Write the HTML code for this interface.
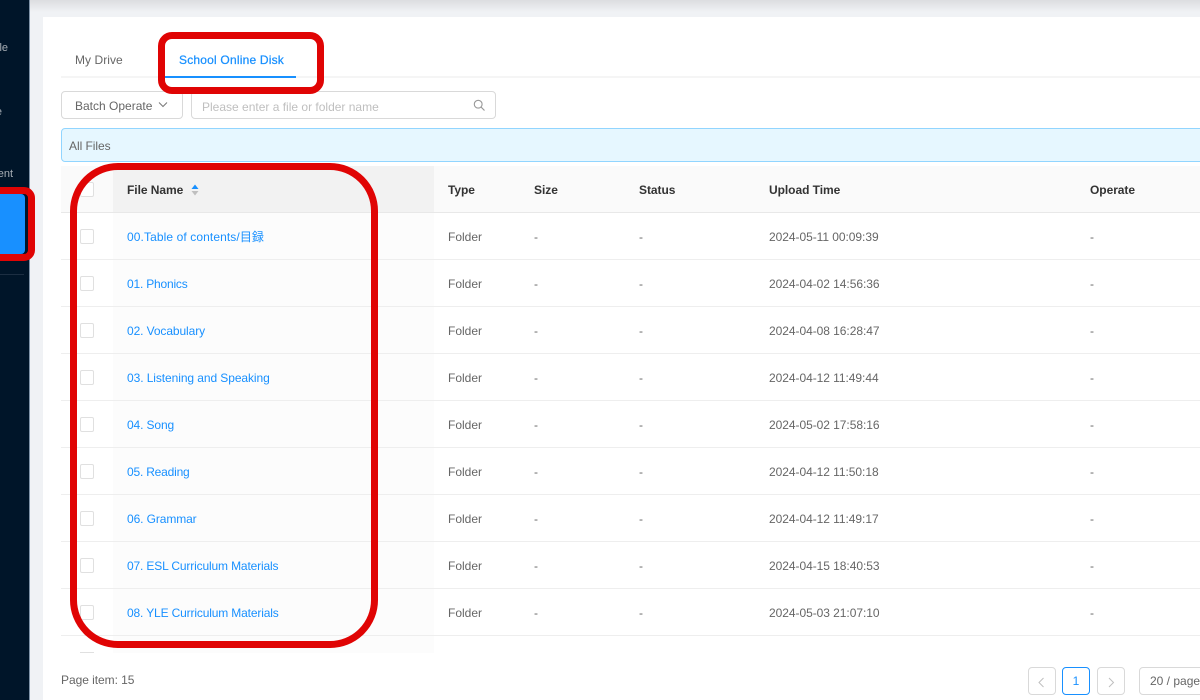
<!DOCTYPE html>
<html><head><meta charset="utf-8"><style>
html,body{margin:0;padding:0;width:1200px;height:700px;overflow:hidden;background:#fff}
body{position:relative;font-family:"Liberation Sans","Noto Sans CJK JP",sans-serif;font-size:12px;color:#666}
.a{position:absolute;white-space:nowrap}
.t{position:absolute;white-space:nowrap;line-height:16px}
.cb{position:absolute;left:80px;width:12px;height:13px;border:1px solid #e0e0e0;border-radius:2px;background:#fff}
.line{position:absolute;left:61px;width:1139px;height:1px;background:#e8e8e8}
.name{left:127px;color:#1890ff}
.h{font-weight:bold;color:#333;letter-spacing:-.05px}
.red{position:absolute;border:7px solid #e00404;box-sizing:border-box}
</style></head><body>
<div class="a" style="left:0;top:0;width:29px;height:700px;background:#001529"></div>
<div class="a" style="left:29px;top:0;width:1px;height:700px;background:#7f93a8"></div>
<div class="a" style="left:30px;top:0;width:1170px;height:700px;background:#f0f2f5"></div>
<div class="a" style="left:30px;top:0;width:1170px;height:12px;background:linear-gradient(#dcdde0,#f0f2f5)"></div>
<div class="a" style="left:43px;top:17px;width:1157px;height:683px;background:#fff"></div>

<div class="t" style="right:1192px;top:40px;color:#a6adb4;font-size:11px">le</div>
<div class="t" style="right:1198px;top:104px;color:#a6adb4;font-size:11px">e</div>
<div class="t" style="right:1187px;top:166px;color:#a6adb4;font-size:11px">ent</div>
<div class="a" style="left:0;top:194px;width:25px;height:60px;background:#1890ff;border-radius:0 4px 4px 0"></div>
<div class="a" style="left:0;top:274px;width:24px;height:1px;background:#1c2e42"></div>

<div class="t" style="left:75px;top:52px;font-size:12px;letter-spacing:.05px">My Drive</div>
<div class="t" style="left:179px;top:52px;font-size:12px;color:#1890ff;letter-spacing:.2px;-webkit-text-stroke:.25px #1890ff">School Online Disk</div>
<div class="a" style="left:61px;top:76px;width:1139px;height:2px;background:#f5f5f5"></div>
<div class="a" style="left:165px;top:76px;width:131px;height:2px;background:#1890ff"></div>

<div class="a" style="left:61px;top:91px;width:122px;height:28px;border:1px solid #d9d9d9;border-radius:4px;box-sizing:border-box"></div>
<div class="t" style="left:75px;top:98px;font-size:12px">Batch Operate</div>
<svg class="a" style="left:158px;top:101px" width="10" height="8" viewBox="0 0 10 8"><path d="M1 1.5 5 5.5 9 1.5" fill="none" stroke="#777" stroke-width="1"/></svg>
<div class="a" style="left:191px;top:91px;width:305px;height:28px;border:1px solid #d9d9d9;border-radius:4px;box-sizing:border-box"></div>
<div class="t" style="left:202px;top:99px;color:#bfbfbf;font-size:12px">Please enter a file or folder name</div>
<svg class="a" style="left:473px;top:99px" width="13" height="13" viewBox="0 0 13 13"><circle cx="5.2" cy="5.2" r="3.9" fill="none" stroke="#999" stroke-width="1.1"/><path d="M8 8 11.5 11.5" stroke="#999" stroke-width="1.2"/></svg>

<div class="a" style="left:61px;top:128px;width:1145px;height:34px;background:#e6f7ff;border:1px solid #91d5ff;border-radius:4px;box-sizing:border-box"></div>
<div class="t" style="left:69px;top:138px;font-size:12px;letter-spacing:-.05px">All Files</div>

<div class="a" style="left:61px;top:166px;width:1139px;height:46px;background:#fafafa"></div>
<div class="a" style="left:113px;top:166px;width:321px;height:46px;background:#f2f2f2"></div>
<div class="a" style="left:61px;top:213px;width:1139px;height:440px;background:#fff"></div>
<div class="a" style="left:113px;top:213px;width:321px;height:440px;background:#fcfcfc"></div>
<div class="line" style="top:212px"></div><div class="line" style="top:259px;background:#eee"></div><div class="line" style="top:306px;background:#eee"></div><div class="line" style="top:353px;background:#eee"></div><div class="line" style="top:400px;background:#eee"></div><div class="line" style="top:447px;background:#eee"></div><div class="line" style="top:494px;background:#eee"></div><div class="line" style="top:541px;background:#eee"></div><div class="line" style="top:588px;background:#eee"></div><div class="line" style="top:635px;background:#eee"></div>

<div class="cb" style="top:182px"></div>
<div class="t h" style="left:127px;top:182px">File Name</div>
<svg class="a" style="left:191px;top:184px" width="8" height="12" viewBox="0 0 8 12"><path d="M4 0.5 7.5 5H.5Z" fill="#1890ff"/><path d="M4 11.5 7.5 7H.5Z" fill="#bfbfbf"/></svg>
<div class="t h" style="left:448px;top:182px">Type</div>
<div class="t h" style="left:534px;top:182px">Size</div>
<div class="t h" style="left:639px;top:182px">Status</div>
<div class="t h" style="left:769px;top:182px">Upload Time</div>
<div class="t h" style="left:1090px;top:182px">Operate</div>

<div class="cb" style="top:229px"></div><div class="t name" style="top:229px;letter-spacing:.1px">00.Table of contents/<span style="letter-spacing:0">目録</span></div><div class="t" style="left:448px;top:229px">Folder</div><div class="t" style="left:534px;top:229px">-</div><div class="t" style="left:639px;top:229px">-</div><div class="t" style="left:769px;top:229px;letter-spacing:-.05px">2024-05-11 00:09:39</div><div class="t" style="left:1090px;top:229px">-</div>
<div class="cb" style="top:276px"></div><div class="t name" style="top:276px;letter-spacing:-.2px">01. Phonics</div><div class="t" style="left:448px;top:276px">Folder</div><div class="t" style="left:534px;top:276px">-</div><div class="t" style="left:639px;top:276px">-</div><div class="t" style="left:769px;top:276px;letter-spacing:-.05px">2024-04-02 14:56:36</div><div class="t" style="left:1090px;top:276px">-</div>
<div class="cb" style="top:323px"></div><div class="t name" style="top:323px;letter-spacing:-.1px">02. Vocabulary</div><div class="t" style="left:448px;top:323px">Folder</div><div class="t" style="left:534px;top:323px">-</div><div class="t" style="left:639px;top:323px">-</div><div class="t" style="left:769px;top:323px;letter-spacing:-.05px">2024-04-08 16:28:47</div><div class="t" style="left:1090px;top:323px">-</div>
<div class="cb" style="top:370px"></div><div class="t name" style="top:370px;letter-spacing:-.08px">03. Listening and Speaking</div><div class="t" style="left:448px;top:370px">Folder</div><div class="t" style="left:534px;top:370px">-</div><div class="t" style="left:639px;top:370px">-</div><div class="t" style="left:769px;top:370px;letter-spacing:-.05px">2024-04-12 11:49:44</div><div class="t" style="left:1090px;top:370px">-</div>
<div class="cb" style="top:417px"></div><div class="t name" style="top:417px;letter-spacing:-.12px">04. Song</div><div class="t" style="left:448px;top:417px">Folder</div><div class="t" style="left:534px;top:417px">-</div><div class="t" style="left:639px;top:417px">-</div><div class="t" style="left:769px;top:417px;letter-spacing:-.05px">2024-05-02 17:58:16</div><div class="t" style="left:1090px;top:417px">-</div>
<div class="cb" style="top:464px"></div><div class="t name" style="top:464px;letter-spacing:-.2px">05. Reading</div><div class="t" style="left:448px;top:464px">Folder</div><div class="t" style="left:534px;top:464px">-</div><div class="t" style="left:639px;top:464px">-</div><div class="t" style="left:769px;top:464px;letter-spacing:-.05px">2024-04-12 11:50:18</div><div class="t" style="left:1090px;top:464px">-</div>
<div class="cb" style="top:511px"></div><div class="t name" style="top:511px;letter-spacing:-.1px">06. Grammar</div><div class="t" style="left:448px;top:511px">Folder</div><div class="t" style="left:534px;top:511px">-</div><div class="t" style="left:639px;top:511px">-</div><div class="t" style="left:769px;top:511px;letter-spacing:-.05px">2024-04-12 11:49:17</div><div class="t" style="left:1090px;top:511px">-</div>
<div class="cb" style="top:558px"></div><div class="t name" style="top:558px;letter-spacing:-.15px">07. ESL Curriculum Materials</div><div class="t" style="left:448px;top:558px">Folder</div><div class="t" style="left:534px;top:558px">-</div><div class="t" style="left:639px;top:558px">-</div><div class="t" style="left:769px;top:558px;letter-spacing:-.05px">2024-04-15 18:40:53</div><div class="t" style="left:1090px;top:558px">-</div>
<div class="cb" style="top:605px"></div><div class="t name" style="top:605px;letter-spacing:-.15px">08. YLE Curriculum Materials</div><div class="t" style="left:448px;top:605px">Folder</div><div class="t" style="left:534px;top:605px">-</div><div class="t" style="left:639px;top:605px">-</div><div class="t" style="left:769px;top:605px;letter-spacing:-.05px">2024-05-03 21:07:10</div><div class="t" style="left:1090px;top:605px">-</div>
<div class="a" style="left:80px;top:652px;width:14px;height:1px;background:#e0e0e0"></div>

<div class="t" style="left:61px;top:672px;letter-spacing:-.05px">Page item: 15</div>
<div class="a" style="left:1028px;top:667px;width:28px;height:28px;border:1px solid #d9d9d9;border-radius:4px;box-sizing:border-box"></div>
<svg class="a" style="left:1037px;top:677px" width="9" height="12" viewBox="0 0 9 12"><path d="M6.5 1 2 5.5 6.5 10" fill="none" stroke="#bfbfbf" stroke-width="1"/></svg>
<div class="a" style="left:1062px;top:667px;width:28px;height:28px;border:1px solid #1890ff;border-radius:4px;box-sizing:border-box;text-align:center;line-height:27px;color:#1890ff">1</div>
<div class="a" style="left:1097px;top:667px;width:28px;height:28px;border:1px solid #d9d9d9;border-radius:4px;box-sizing:border-box"></div>
<svg class="a" style="left:1107px;top:677px" width="9" height="12" viewBox="0 0 9 12"><path d="M2 1 6.5 5.5 2 10" fill="none" stroke="#bfbfbf" stroke-width="1"/></svg>
<div class="a" style="left:1139px;top:667px;width:80px;height:28px;border:1px solid #d9d9d9;border-radius:4px;box-sizing:border-box"></div>
<div class="t" style="left:1150px;top:673px;font-size:12px">20 / page</div>

<div class="red" style="left:158px;top:32px;width:166px;height:62px;border-radius:14px"></div>
<div class="red" style="left:-30px;top:187px;width:65px;height:74px;border-radius:11px"></div>
<div class="red" style="left:70px;top:163px;width:308px;height:485px;border-radius:48px"></div>
</body></html>
